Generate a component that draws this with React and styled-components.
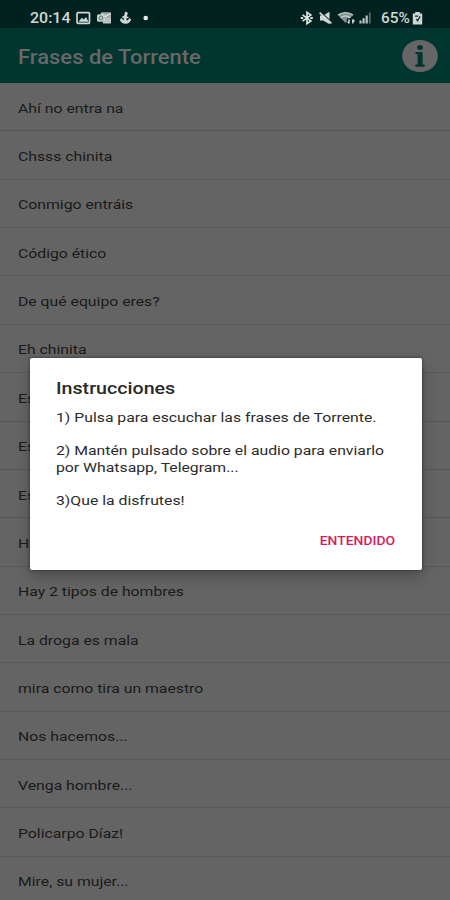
import React from "react";
import styled, { createGlobalStyle } from "styled-components";

// Styles

const GlobalStyle = createGlobalStyle`
  * {
    box-sizing: border-box;
  }

  body {
    margin: 0;
    background-color: #646464;
    font-family: Roboto, "Liberation Sans", sans-serif;
  }
`

const Container = styled.div`
  width: 450px;
  height: 900px;
  position: relative;
  overflow: hidden;
  display: flex;
  flex-direction: column;
  background-color: #646464;
`

// Wide text, every label on the screen uses it
const Text = styled.span`
  display: block;
  white-space: pre;
  transform: scaleX(${(props) => props.$stretch || 1.16});
  transform-origin: ${(props) => props.$origin || "left"} center;
`

const StatusBar = styled.div`
  flex: none;
  height: 28px;
  padding: 7px 27px 0 30px;
  display: flex;
  justify-content: space-between;
  background-color: #00221e;
  color: #cfd8d6;
  font-size: 15.5px;
  font-weight: 500;
  line-height: 22px;
`

const StatusGroup = styled.div`
  height: 22px;
  display: flex;
  align-items: center;

  svg {
    display: block;
    flex: none;
  }
`

const Clock = styled.div`
  width: 46px;
`

const Battery = styled.div`
  width: 31px;
  margin-left: 10px;
`

const Toolbar = styled.header`
  flex: none;
  height: 55px;
  padding: 0 12px 0 18px;
  display: flex;
  align-items: center;
  justify-content: space-between;
  background-color: #003530;
`

const Title = styled.h1`
  margin: 3px 0 0;
  color: #686868;
  font-size: 19.5px;
  font-weight: 500;
`

const InfoButton = styled.button`
  width: 36px;
  height: 34px;
  padding: 0;
  border: 0;
  background: none;

  svg {
    display: block;
  }
`

const List = styled.ul`
  margin: 0;
  padding: 0;
  list-style: none;
`

const Item = styled.li`
  height: 48.37px;
  padding: 2px 18px 0;
  display: flex;
  align-items: center;
  border-bottom: 1px solid #585858;
  color: #1a1a1a;
  font-size: 13.6px;
`

const Overlay = styled.div`
  position: absolute;
  inset: 0;
  padding: 358px 28.5px 0 29.5px;
`

const Dialog = styled.div`
  height: 212px;
  padding: 20px 26px 0 26.5px;
  display: flex;
  flex-direction: column;
  border-radius: 2px;
  background-color: #fff;
  box-shadow: 0 6px 14px rgba(0, 0, 0, 0.25), 0 0 3px rgba(0, 0, 0, 0.5);
`

const DialogTitle = styled.h2`
  margin: 0;
  color: #2a2a2a;
  font-size: 16.5px;
  font-weight: 500;
  line-height: 21px;
`

const Message = styled.div`
  margin-top: 10px;
  color: #2b2b2b;
  font-size: 13.6px;
  line-height: 16.55px;
`

const Actions = styled.div`
  margin-top: 25px;
  display: flex;
  justify-content: flex-end;
`

const ActionButton = styled.button`
  padding: 0;
  border: 0;
  background: none;
  color: #d81b60;
  font-family: inherit;
  font-size: 12.2px;
  font-weight: 500;
  line-height: 16px;
`

const phrases = [
  "Ahí no entra na",
  "Chsss chinita",
  "Conmigo entráis",
  "Código ético",
  "De qué equipo eres?",
  "Eh chinita",
  "Es",
  "Es",
  "Es",
  "Ha",
  "Hay 2 tipos de hombres",
  "La droga es mala",
  "mira como tira un maestro",
  "Nos hacemos...",
  "Venga hombre...",
  "Policarpo Díaz!",
  "Mire, su mujer...",
];

// Picture, mail, anchor and dot
const Notifications = () => (
  <svg width="76" height="16" viewBox="0 0 76 16">
    <rect x="1" y="2.7" width="12.5" height="10.6" rx="1" fill="none" stroke="#cfd8d6" strokeWidth="1.7" />
    <path d="M2.5 11.8l3.3-4.1 2 1.8 2.2-2.4 2.5 4.7z" fill="#cfd8d6" />
    <rect x="25" y="2.3" width="10" height="9" rx="1" fill="#a0adab" />
    <path d="M25 3.5l4.5 3 5-3" fill="none" stroke="#dfe5e4" strokeWidth="1.4" />
    <rect x="27" y="8" width="8" height="5.5" rx="0.5" fill="#b9c4c2" />
    <rect x="21" y="4.3" width="8" height="7.5" rx="1.5" fill="#c4cecc" />
    <ellipse cx="25" cy="8" rx="1.8" ry="2" fill="none" stroke="#5c736f" />
    <path d="M49 1.9c1.6-.8 3.1.5 2.6 2.1l-.9 2.4 2 .4-.3 1.3-1.9.2.1 2.5c1.4-.4 2.2-1.2 2.5-2.7l2 1.1c-.4 2.7-2.6 4.6-5.6 4.6s-5.2-1.5-5.6-4.2l2.1-1.6c.4 1.2.9 2 1.9 2.4l-.2-2.5-1.4-.2v-1.5l1.8-.5z" fill="#cfd8d6" />
    <circle cx="69.7" cy="8" r="2.3" fill="#e4eae9" />
  </svg>
);

// Bluetooth, muted, wifi and signal
const Connectivity = () => (
  <svg width="71" height="16" viewBox="0 0 71 16">
    <path d="M2.6 4.9l8.2 6L7 13.6V2.4l3.8 2.7-8.2 6" fill="none" stroke="#dce3e2" strokeWidth="1.7" />
    <path d="M.8 8h2.4M10.4 8h2.4" stroke="#dce3e2" strokeWidth="2" />
    <path d="M20 5.5h3.2l6.3-3.7v12.4L23.2 10.5H20z" fill="#cfd8d6" />
    <path d="M20.8 2.2L32 12.4" stroke="#00221e" strokeWidth="1.3" />
    <path d="M19.6 2.6L31.4 13.4" stroke="#cfd8d6" strokeWidth="1.8" />
    <path d="M38 5c4.5-3.2 10.5-3.2 15 0l-7.5 8z" fill="#83938f" />
    <path d="M38 5c4.5-3.2 10.5-3.2 15 0M40.5 7.8c3-2.3 7-2.3 10 0" fill="none" stroke="#c6d0ce" strokeWidth="1.4" />
    <path d="M48.6 8.6v5M52.6 8.6v5" stroke="#00221e" strokeWidth="3.6" />
    <path d="M49 9.6v4M47.8 11.6L49 13.3M52.8 13.6v-4M54.4 11.4l-1.6-1.8" fill="none" stroke="#cfd8d6" strokeWidth="1.5" />
    <path d="M60.5 13.5v-3M63.6 13.5V8.3M66.7 13.5V5.6" stroke="#b9c5c2" strokeWidth="2.2" />
    <path d="M69.8 13.5V2.6" stroke="#536b67" strokeWidth="1.8" />
  </svg>
);

const BatteryIcon = () => (
  <svg width="11" height="14" viewBox="0 0 11 14">
    <path d="M3.2 1h4.6v1.6h2.4v10.8H.8V2.6h2.4z" fill="#cfd8d6" />
    <path d="M3 5.2h3.2M4.4 7.8l1.2 2L8.2 5.4" fill="none" stroke="#17332f" strokeWidth="1.3" />
  </svg>
);

const InfoIcon = () => (
  <svg width="36" height="34" viewBox="0 0 36 34">
    <ellipse cx="18" cy="17" rx="17.8" ry="16.1" fill="#666" />
    <ellipse cx="18" cy="8.6" rx="2.9" ry="2.5" fill="#003530" />
    <path d="M13.6 13h7v12.6h2v2.2h-9.2v-2.2h2.2V15.2h-2z" fill="#003530" />
  </svg>
);

const App = () => {
  return (
    <Container>
      <GlobalStyle />

      <StatusBar>
        <StatusGroup>
          <Clock>
            <Text $stretch={1.03}>20:14</Text>
          </Clock>
          <Notifications />
        </StatusGroup>
        <StatusGroup>
          <Connectivity />
          <Battery>
            <Text $stretch={0.99}>65%</Text>
          </Battery>
          <BatteryIcon />
        </StatusGroup>
      </StatusBar>

      <Toolbar>
        <Title>
          <Text $stretch={1.127}>Frases de Torrente</Text>
        </Title>
        <InfoButton aria-label="Info">
          <InfoIcon />
        </InfoButton>
      </Toolbar>

      <List>
        {phrases.map((phrase, i) => (
          <Item key={i}>
            <Text>{phrase}</Text>
          </Item>
        ))}
      </List>

      <Overlay>
        <Dialog role="dialog">
          <DialogTitle>
            <Text $stretch={1.19}>Instrucciones</Text>
          </DialogTitle>
          <Message>
            <Text>1) Pulsa para escuchar las frases de Torrente.</Text>
            <br />
            <Text>2) Mantén pulsado sobre el audio para enviarlo</Text>
            <Text>por Whatsapp, Telegram...</Text>
            <br />
            <Text>3)Que la disfrutes!</Text>
          </Message>
          <Actions>
            <ActionButton>
              <Text $origin="right" $stretch={1.14}>ENTENDIDO</Text>
            </ActionButton>
          </Actions>
        </Dialog>
      </Overlay>
    </Container>
  );
};

export default App;
